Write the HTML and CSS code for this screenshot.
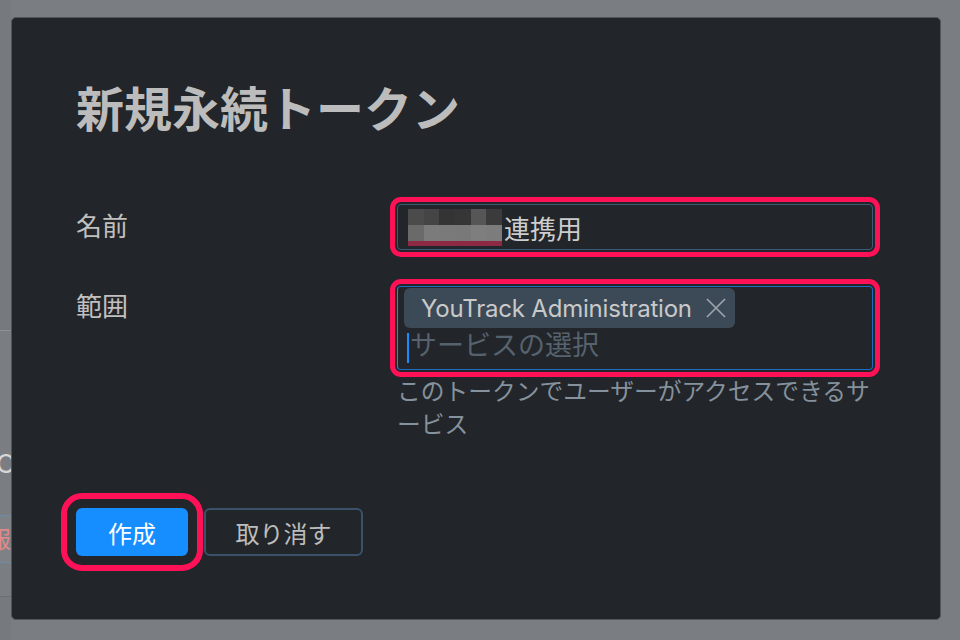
FILE: index.html
```html
<!DOCTYPE html>
<html lang="ja">

<head>
    <meta charset="UTF-8">
    <meta name="viewport" content="width=device-width, initial-scale=1.0">
    <title>新規永続トークン</title>

    <link rel="stylesheet" href="styles.css">
</head>

<body>

    <!-- Page behind the dialog -->
    <div class="page">
        <div class="page-row row-first"></div>
        <div class="page-row row-c"><span class="page-text">C</span></div>
        <div class="page-row row-red"><span class="page-text red">報</span></div>
        <div class="page-row row-after"></div>
        <div class="page-row row-last"></div>
    </div>

    <!-- Dialog -->
    <div class="overlay">
        <div class="dialog">
            <h1 class="dialog-title">新規永続トークン</h1>

            <div class="form">
                <div class="form-row">
                    <label class="form-label">名前</label>
                    <div class="form-field">
                        <div class="text-input marked">
                            <span class="mosaic">
                                <i style="background:#4b4b4b"></i><i style="background:#454545"></i><i style="background:#343434"></i><i style="background:#363636"></i><i style="background:#565656"></i><i style="background:#3b3b3b"></i>
                                <i style="background:#6a6a6a"></i><i style="background:#7b7b7b"></i><i style="background:#7a7a7a"></i><i style="background:#797979"></i><i style="background:#7e7e7e"></i><i style="background:#7c7c7c"></i>
                                <b></b>
                            </span>
                            <span class="input-value">連携用</span>
                        </div>
                    </div>
                </div>

                <div class="form-row">
                    <label class="form-label form-label-tags">範囲</label>
                    <div class="form-field">
                        <div class="tag-input marked">
                            <span class="tag">
                                <span class="tag-text">YouTrack Administration</span>
                                <svg class="tag-remove" width="22" height="22" viewBox="0 0 22 22">
                                    <path d="M2 2 L20 20 M20 2 L2 20" stroke="#9ba4ad" stroke-width="1.7" fill="none" />
                                </svg>
                            </span>
                            <div class="tag-line">
                                <span class="caret"></span>
                                <span class="placeholder">サービスの選択</span>
                            </div>
                        </div>
                        <p class="hint">このトークンでユーザーがアクセスできるサービス</p>
                    </div>
                </div>
            </div>

            <div class="dialog-buttons">
                <button class="btn btn-primary marked-btn">作成</button>
                <button class="btn btn-secondary">取り消す</button>
            </div>
        </div>
    </div>

</body>

</html>
```

FILE: styles.css
```css
/* General */
body {
    margin: 0;
    padding: 0;
    width: 960px;
    height: 640px;
    overflow: hidden;
    background-color: #7a7d81;
    font-family: 'Inter', 'Noto Sans CJK JP', sans-serif;
    color: #c0c0c0;
}

/* Page behind the overlay (only its left edge shows) */
.page {
    width: 11px;
}

.page-row {
    box-sizing: border-box;
    overflow: hidden;
    white-space: nowrap;
}

.row-first {
    height: 331px;
    background-color: #76797d;
    border-bottom: 1px solid #8c9297;
}

.row-c {
    height: 184px;
    padding-top: 118px;
}

.row-red {
    height: 48px;
    border-top: 1px solid #6d8aa6;
    border-bottom: 1px solid #6d8aa6;
    background-color: #7e8185;
    padding-top: 9px;
}

.row-after {
    height: 34px;
    border-bottom: 1px solid #6c7074;
}

.row-last {
    height: 60px;
    background-color: #76797d;
}

.page-text {
    display: inline-block;
    font-size: 26px;
    line-height: 30px;
    color: #d6d6d6;
    margin-left: -4px;
}

.page-text.red {
    color: #e08a8a;
    font-size: 24px;
    margin-left: -13px;
}

/* Overlay + dialog */
.overlay {
    position: fixed;
    top: 0;
    left: 0;
    right: 0;
    bottom: 0;
    padding: 17px 19px 20px 11px;
    display: flex;
}

.dialog {
    flex: 1;
    box-sizing: border-box;
    display: flex;
    flex-direction: column;
    background-color: #222529;
    border: 1px solid #4f565d;
    border-radius: 5px;
    padding: 0 67px 63px 64px;
}

.dialog-title {
    margin: 64px 0 0;
    font-size: 48px;
    line-height: 56px;
    font-weight: 700;
    color: #bcbcbc;
}

/* Form */
.form {
    margin-top: 66px;
    display: flex;
    flex-direction: column;
    gap: 36px;
}

.form-row {
    display: grid;
    grid-template-columns: 321px 1fr;
}

.form-label {
    font-size: 26px;
    line-height: 46px;
    color: #c0c0c0;
}

.form-label-tags {
    line-height: 42px;
}

.marked {
    outline: 5px solid #ff1158;
    outline-offset: 2px;
}

.text-input {
    box-sizing: border-box;
    height: 46px;
    border: 1px solid #3b5a78;
    border-radius: 4px;
    padding-left: 10px;
    display: flex;
    align-items: center;
}

.mosaic {
    display: grid;
    grid-template-columns: repeat(6, 1fr);
    grid-template-rows: 16px 16px 5px;
    width: 94px;
}

.mosaic i {
    display: block;
}

.mosaic b {
    grid-column: 1 / 7;
    background-color: #8d2945;
}

.input-value {
    font-size: 26px;
    color: #cdcdcd;
    padding-left: 2px;
}

/* Tags */
.tag-input {
    box-sizing: border-box;
    height: 84px;
    border: 1px solid #1f6fbf;
    border-left-color: #1a8cff;
    border-radius: 4px;
    padding: 1px 6px;
}

.tag {
    display: inline-flex;
    align-items: center;
    gap: 13px;
    height: 40px;
    padding: 0 8px 0 17px;
    border-radius: 6px;
    background-color: #3c4a57;
}

.tag-text {
    font-size: 24px;
    letter-spacing: -0.2px;
    color: #c9c9c9;
}

.tag-remove {
    display: block;
}

.tag-line {
    display: flex;
    align-items: center;
    height: 40px;
    padding-left: 3px;
}

.caret {
    width: 2px;
    height: 30px;
    background-color: #1a8cff;
}

.placeholder {
    font-size: 27px;
    line-height: 34px;
    color: #56626d;
    margin-left: 1px;
    margin-bottom: 4px;
}

.hint {
    margin: 5px 0 0;
    font-size: 23.75px;
    line-height: 33px;
    color: #85919c;
}

/* Buttons */
.dialog-buttons {
    margin-top: auto;
    display: flex;
    gap: 16px;
}

.btn {
    box-sizing: border-box;
    height: 48px;
    border-radius: 6px;
    font-family: 'Noto Sans CJK JP', sans-serif;
    font-size: 24px;
    cursor: pointer;
}

.btn-primary {
    width: 112px;
    border: none;
    background-color: #168eff;
    color: #ffffff;
}

.marked-btn {
    outline: 6px solid #ff1158;
    outline-offset: 9px;
    border-radius: 6px;
}

.btn-secondary {
    width: 159px;
    border: 2px solid #3a5269;
    background-color: transparent;
    color: #bdbdbd;
}
```
